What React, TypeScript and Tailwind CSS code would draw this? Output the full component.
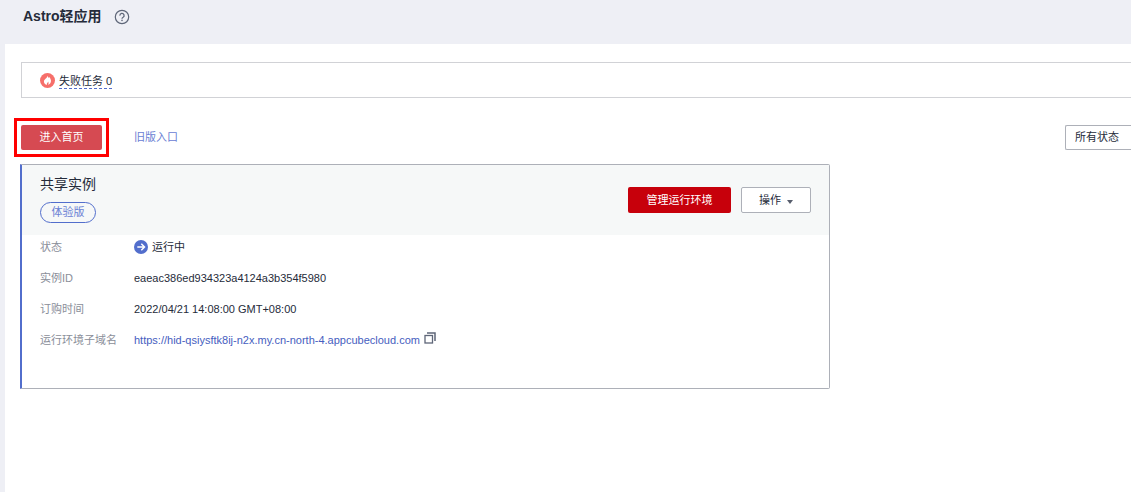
import type { ReactNode } from 'react'

interface InstanceField {
  label: string
  value: ReactNode
}

function HelpIcon({ className = '' }: { className?: string }) {
  return (
    <svg viewBox="0 0 16 16" fill="none" className={className} aria-hidden="true">
      <circle cx="8" cy="8" r="6.7" stroke="#5e6678" strokeWidth="1.2" />
      <path d="M5.9 6.6a2.1 2.1 0 1 1 3.2 1.7c-.7.4-1.1.7-1.1 1.5" stroke="#5e6678" strokeWidth="1.3" />
      <rect x="7.3" y="10.7" width="1.4" height="1.4" fill="#5e6678" />
    </svg>
  )
}

function FailedIcon({ className = '' }: { className?: string }) {
  return (
    <svg viewBox="0 0 16 16" className={className} aria-hidden="true">
      <circle cx="8" cy="8" r="8" fill="#f66f6a" />
      <path
        d="M8.2 2.8c.3 1.200.7 1.700 1.200 2.400.4-.3.6-.6.6-1 1 1.300 1.700 2.800 1.700 4.400 0 1.900-1.300 3.600-3.200 4.200.900-1.100.700-2.600.200-3.700-.200.800-.700 1.200-1.200 1.800-.4.600-.400 1.300-.100 1.900-1.900-.500-3.200-2-3.200-3.800 0-2.600 3.200-3.200 4-6.200z"
        fill="#fff"
      />
    </svg>
  )
}

function RunningIcon({ className = '' }: { className?: string }) {
  return (
    <svg viewBox="0 0 14 14" fill="none" className={className} aria-hidden="true">
      <circle cx="7" cy="7" r="7" fill="#526ecc" />
      <path d="M3.3 7h7M7.3 3.8 10.5 7l-3.2 3.2" stroke="#fff" strokeWidth="1.5" />
    </svg>
  )
}

function CopyIcon({ className = '' }: { className?: string }) {
  return (
    <svg viewBox="0 0 12 12" fill="none" className={className} aria-hidden="true">
      <path d="M3 1h8v8" stroke="#5e6678" strokeWidth="1.5" />
      <rect x="1" y="3.5" width="7.5" height="7.5" stroke="#5e6678" strokeWidth="1.3" />
    </svg>
  )
}

const fields: InstanceField[] = [
  {
    label: '状态',
    value: (
      <>
        <RunningIcon className="mr-1 size-3.5" />
        运行中
      </>
    ),
  },
  { label: '实例ID', value: 'eaeac386ed934323a4124a3b354f5980' },
  { label: '订购时间', value: '2022/04/21 14:08:00 GMT+08:00' },
  {
    label: '运行环境子域名',
    value: (
      <>
        <a href="https://hid-qsiysftk8ij-n2x.my.cn-north-4.appcubecloud.com" className="text-[#465ec0]">
          https://hid-qsiysftk8ij-n2x.my.cn-north-4.appcubecloud.com
        </a>
        <button type="button" aria-label="复制" className="ml-1 pb-1">
          <CopyIcon className="size-3" />
        </button>
      </>
    ),
  },
]

function InstanceCard() {
  return (
    <section className="-ml-px w-full max-w-[810px] rounded-r-xs border border-l-2 border-[#adb0b8] border-l-[#526ecc] pb-9">
      {/* Card header */}
      <div className="flex h-[70px] items-start justify-between bg-[#f6f8f8] px-[18px]">
        <div className="pt-[9px]">
          <h2 className="text-sm leading-5 text-[#252b3a]">共享实例</h2>
          <span className="mt-2 flex h-[21px] w-14 items-center justify-center rounded-full border border-[#526ecc] text-[#6a80d4]">
            体验版
          </span>
        </div>
        <div className="flex gap-2.5 pt-[22px]">
          <button type="button" className="h-[26px] w-[103px] rounded-xs bg-[#c7000b] text-white">
            管理运行环境
          </button>
          <button
            type="button"
            className="flex h-[26px] w-[70px] items-center justify-center rounded-xs border border-[#adb0b8] bg-white"
          >
            操作
            <svg viewBox="0 0 6 4" className="mt-1 ml-1.5 h-1 w-1.5" aria-hidden="true">
              <path d="M0 0h6L3 4z" fill="#575d6c" />
            </svg>
          </button>
        </div>
      </div>

      {/* Instance details */}
      <dl className="grid grid-cols-[94px_1fr] gap-y-[7px] pl-[18px] leading-6">
        {fields.map((field) => (
          <div key={field.label} className="contents">
            <dt className="text-[#8a8e99]">{field.label}</dt>
            <dd className="flex items-center">{field.value}</dd>
          </div>
        ))}
      </dl>
    </section>
  )
}

export default function App() {
  return (
    <div className="flex min-h-screen flex-col bg-[#eeeff5] font-['Liberation_Sans','Noto_Sans_CJK_SC',sans-serif] text-[11px] text-[#252b3a]">
      <header className="flex h-11 items-start pt-1.5 pl-[23px]">
        <h1 className="text-sm leading-5 font-bold">Astro轻应用</h1>
        <button type="button" aria-label="帮助" className="mt-[3px] ml-3">
          <HelpIcon className="size-4" />
        </button>
      </header>

      <main className="ml-[5px] flex-1 bg-white pt-[18px] pl-4">
        {/* Task summary */}
        <div className="flex h-9 items-center border border-r-0 border-[#d1d2d6] pl-[18px]">
          <FailedIcon className="mr-1 size-[15px]" />
          <a href="#failed" className="border-b border-dashed border-[#526ecc] pt-0.5 leading-[14px]">
            失败任务 0
          </a>
        </div>

        {/* Toolbar */}
        <div className="mt-[27px] mb-3.5 flex h-[25px] items-center">
          <div className="h-full outline-3 outline-offset-4 outline-[#ff0000]">
            <button type="button" className="h-full w-[81px] rounded-xs bg-[#d64a52] text-white">
              进入首页
            </button>
          </div>
          <a href="#legacy" className="ml-8 text-[#6a80d4]">
            旧版入口
          </a>
          <select
            aria-label="实例状态"
            className="ml-auto h-full w-[66px] appearance-none rounded-l-xs border border-r-0 border-[#adb0b8] bg-white pl-[9px]"
          >
            <option>所有状态</option>
          </select>
        </div>

        <InstanceCard />
      </main>
    </div>
  )
}
